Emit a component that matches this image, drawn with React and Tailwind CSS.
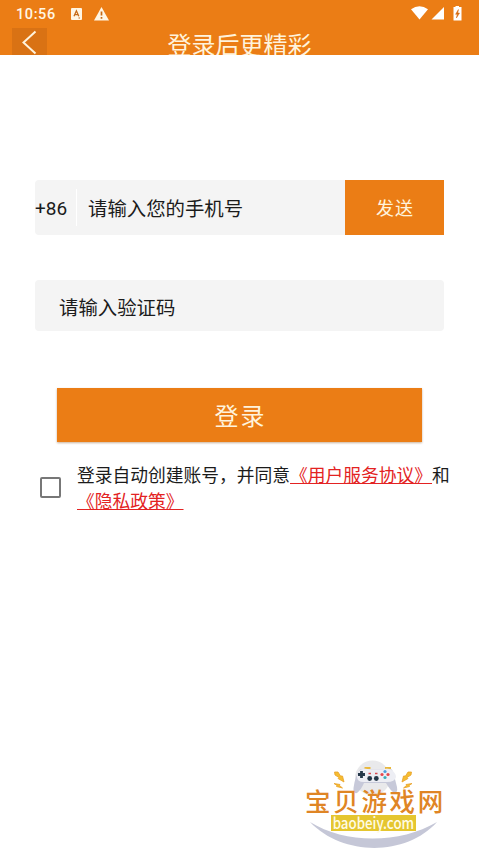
import { useState } from 'react';

const StatusBar = () => (
    <div className="flex h-7 shrink-0 items-center justify-between pl-4 pr-4 text-[#fff6e4]">
        <div className="flex items-center">
            <span className="w-[55px] pt-[2px] font-[Roboto] text-[14.5px] font-medium leading-none tracking-[0.6px]">10:56</span>
            <svg className="h-3 w-[11px]" viewBox="0 0 11 12">
                <rect width="11" height="12" rx="1" fill="currentColor" />
                <path d="M3 8.2 5.4 2.8 7.8 8.2M3.8 6.6H7" fill="none" stroke="#c66a16" strokeWidth="1.3" />
                <path d="M7.5 10h1.5" stroke="#c66a16" />
            </svg>
            <svg className="ml-3 h-[14px] w-[15px]" viewBox="0 0 15 14">
                <path d="M7.5 0 15 13.500H0Z" fill="currentColor" />
                <path d="M7.5 4.6v4M7.5 10v1.8" stroke="#c66a16" strokeWidth="1.7" />
            </svg>
        </div>
        <svg className="h-4 w-[52px]" viewBox="0 0 52 16">
            <path d="M0 3.300Q8.500-2.700 17 3.300L8.500 13.500Z" fill="#fff" />
            <path d="M33 1v12.500H20.500Z" fill="#fff" />
            <path d="M44.500-.5h3.500v1.500h2.500v13.500h-8V1h2Z" fill="#fff" />
            <path d="M47.400 3.500 44.600 8.300h1.700L45.400 12 48.500 7.100h-1.700Z" fill="#d66b10" stroke="#d66b10" strokeWidth="0.500" />
        </svg>
    </div>
);

const Header = () => (
    <header className="flex h-[55px] flex-col overflow-hidden bg-[#eb7d15]">
        <StatusBar />
        <div className="grid h-[27px] grid-cols-[47px_1fr_47px] items-start">
            <button className="ml-3 h-[27px] w-[35px] bg-[#d97214]" aria-label="返回">
                <svg className="h-[27px] w-[35px]" viewBox="0 0 35 27" fill="none">
                    <path d="M23.500 3.500 11.500 14.500 23.500 25.500" stroke="#fff3dc" strokeWidth="2" />
                </svg>
            </button>
            <h1 className="whitespace-nowrap text-center text-[24px] leading-[31px] text-[#fff3dc]">登录后更精彩</h1>
        </div>
    </header>
);

const Logo = () => (
    <div className="relative ml-[303px] h-[93px] w-[144px]">
        <svg className="absolute inset-0 h-full w-full" viewBox="0 0 144 93">
            <circle cx="69.500" cy="18" r="17.500" fill="#e9e9eb" />
            {/* swoosh */}
            <path d="M7 62C42 84 97 84 134 62C103 96.500 40 96.500 7 62Z" fill="#c5c7d7" />
            {/* gamepad */}
            <path d="M61.500 8h6M82 8h6" stroke="#e9b83c" strokeWidth="2" />
            <path d="M57 9.500Q61 8 66 9.500H79Q85 8 89 9.500Q92 18 94 27Q95 33 91 33Q87 30 83 23H61Q58 30 54 33Q50 34 50.500 28Q52 16 57 9.500Z" fill="#c7c9d9" />
            <path d="M58 9.500Q62 8 67 9.500H79Q84 8 88 9.500Q93 13 93 17Q92 22 84 22H61Q54 22 54 17Q54 12 58 9.500Z" fill="#edeef4" />
            <path d="M58.500 11v7M55 14.500h7" stroke="#253849" strokeWidth="2.800" />
            <circle cx="66.700" cy="18.500" r="2.400" fill="#253849" />
            <circle cx="73.300" cy="18.500" r="2.400" fill="#253849" />
            <path d="M65.500 13.500h2.500M72 13.500h2.500" stroke="#d94c52" strokeWidth="1.500" />
            <circle cx="82" cy="11.500" r="1.600" fill="#4b9fe0" />
            <circle cx="79" cy="14.500" r="1.600" fill="#e5484d" />
            <circle cx="85" cy="14.500" r="1.600" fill="#e5484d" />
            <circle cx="82" cy="17.500" r="1.600" fill="#39aebc" />
            {/* sparks */}
            <g fill="#f5bd31" stroke="#e9a12a" strokeWidth="0.800">
                <path d="M31.500 12 35 12 37.500 16 39.500 16 41 22 35 18.500 36 17.500 32 15Z" />
                <path d="M31 23.500 37 24.500 36.500 25.500 39.500 28 33.500 26.500 34 25.500Z" />
                <path d="M108.500 12 105 12 102.500 16 100.500 16 99 22 105 18.500 104 17.500 108 15Z" />
                <path d="M109 23.500 103 24.500 103.500 25.500 100.500 28 106.500 26.500 106 25.500Z" />
            </g>
        </svg>
        <span className="absolute left-[2px] top-[25px] whitespace-nowrap text-[25.500px] font-medium leading-[30px] tracking-[2.700px] text-[#df8525]">宝贝游戏网</span>
        <div className="absolute left-[28px] top-[55px] flex h-[16px] w-[85px] items-center justify-center bg-[#e5c62f]">
            <span className="scale-x-[0.86] pb-px text-[15.500px] font-medium leading-[15px] text-[#fffbe5]">baobeiy.com</span>
        </div>
    </div>
);

const App = () => {
    const [phone, setPhone] = useState('');
    const [code, setCode] = useState('');
    const [agreed, setAgreed] = useState(false);

    return (
        <div className="flex h-[853px] w-[479px] flex-col overflow-hidden bg-white font-['Noto_Sans_CJK_SC',sans-serif] text-[#1b1b1b]">
            <Header />

            <main className="flex flex-1 flex-col pt-[125px]">
                {/* Phone */}
                <div className="mx-[35px] flex h-[55px] items-center rounded-l bg-[#f4f4f4]">
                    <span className="w-[41px] pt-[2px] font-[Roboto] text-[19px] leading-none">+86</span>
                    <span className="h-[37px] w-px bg-white" />
                    <input
                        className="ml-[11px] w-[257px] bg-transparent text-[19.400px] outline-none placeholder:text-[#1b1b1b]"
                        placeholder="请输入您的手机号"
                        value={phone}
                        onChange={(e) => setPhone(e.target.value)}
                    />
                    <button className="h-full w-[99px] shrink-0 bg-[#eb7d15] pl-px text-[18px] tracking-[1px] text-[#fff3dc]">发送</button>
                </div>

                {/* Code */}
                <input
                    className="mx-[35px] mt-[45px] h-[51px] rounded bg-[#f4f4f4] pl-6 pt-px text-[19.400px] outline-none placeholder:text-[#1b1b1b]"
                    placeholder="请输入验证码"
                    value={code}
                    onChange={(e) => setCode(e.target.value)}
                />

                <button className="mx-[57px] mt-[57px] h-[54px] bg-[#eb7d15] pl-[2px] text-[24px] tracking-[2px] text-[#fff3dc] shadow-[0_1px_2px_rgba(120,60,0,0.4)]">登录</button>

                {/* Terms */}
                <div className="ml-10 mt-[19px] flex items-start">
                    <input
                        type="checkbox"
                        className="mt-4 h-[21px] w-[21px] shrink-0 appearance-none rounded-[2px] border-2 border-[#777] checked:bg-[#eb7d15]"
                        checked={agreed}
                        onChange={(e) => setAgreed(e.target.checked)}
                    />
                    <p className="ml-4 w-[380px] text-[17.750px] leading-[26px]">
                        登录自动创建账号，并同意<a className="text-[#e32222] underline" href="#service">《用户服务协议》</a>和
                        <br />
                        <a className="text-[#e32222] underline" href="#privacy">《隐私政策》</a>
                    </p>
                </div>
            </main>

            <Logo />
        </div>
    );
};

export default App;
